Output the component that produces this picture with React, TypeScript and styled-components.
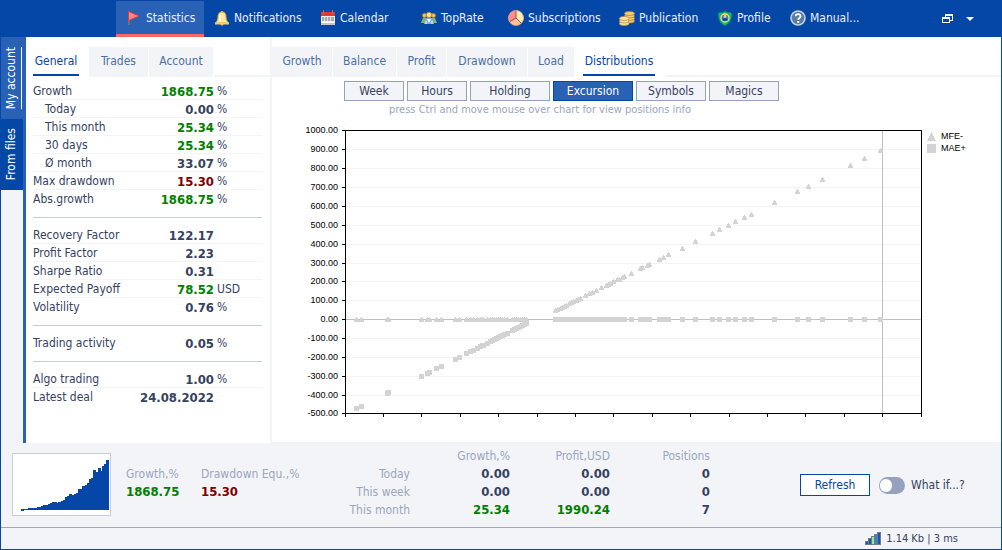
import React, { useState } from "react";
import styled, { createGlobalStyle, css } from "styled-components";

const c = {
  blue: "#0547a6",
  light: "#2961b5",
  panel: "#f3f4f7",
  text: "#35425f",
  muted: "#9aa6bd",
  tab: "#4a70a8",
  border: "#96a2bd",
  green: "#008000",
  red: "#800000",
  coral: "#ff6666",
  mark: "#d3d3d3",
};

const GlobalStyle = createGlobalStyle`
  * { box-sizing: border-box; }
  body { margin: 0; }
  body, button {
    font-family: "DejaVu Sans Condensed", Tahoma, "DejaVu Sans", sans-serif;
    font-size: 12px;
    line-height: 18px;
  }
  button { border: 0; padding: 0; cursor: pointer; white-space: nowrap; }
`;

const Window = styled.div`
  display: flex;
  flex-direction: column;
  min-height: 100vh;
  border: 1px solid ${c.blue};
  background: ${c.panel};
  color: ${c.text};
`;

const Header = styled.header`
  display: flex;
  height: 36px;
  background: ${c.blue};
  padding: 0 24px 0 115px;
`;

const Nav = styled.nav`
  display: flex;
  flex: 1;
`;

const NavButton = styled.button<{ $width: number; $active?: boolean; $apart?: boolean }>`
  display: flex;
  align-items: center;
  gap: 4px;
  width: ${(p) => p.$width}px;
  padding: 3px 0 3px 10px;
  margin-left: ${(p) => (p.$apart ? 15 : 0)}px;
  border-bottom: 3px solid ${(p) => (p.$active ? c.coral : "transparent")};
  background: ${(p) => (p.$active ? c.light : "transparent")};
  color: #e8f0fc;
  svg { flex: none; }
`;

const WindowTools = styled.div`
  display: flex;
  align-items: center;
  gap: 10px;
`;

const ToolButton = styled.button`
  display: flex;
  align-items: center;
  background: transparent;
`;

const Main = styled.main`
  display: flex;
  flex: 1;
`;

const Rail = styled.div`
  display: flex;
  flex-direction: column;
  flex: none;
  width: 25px;
  border-right: 3px solid ${c.light};
`;

const RailButton = styled.button<{ $height: number; $active?: boolean }>`
  display: flex;
  align-items: center;
  justify-content: center;
  height: ${(p) => p.$height}px;
  background: ${(p) => (p.$active ? c.light : c.blue)};
  color: #ffffff;
  span {
    writing-mode: vertical-rl;
    transform: rotate(180deg);
    line-height: 19px;
    border-left: 1px solid ${(p) => (p.$active ? "#ffffff" : "transparent")};
  }
`;

const SidePanel = styled.section`
  flex: none;
  width: 245px;
  background: #ffffff;
  padding-top: 10px;
  border-right: 1px solid ${c.panel};
`;

const ChartPanel = styled.section`
  flex: 1;
  min-width: 0;
  background: #ffffff;
  padding-top: 10px;
  border-bottom: 1px solid ${c.panel};
  margin-left: 1px;
`;

const Tabs = styled.div`
  display: flex;
  gap: 1px;
  height: 30px;
  &::after {
    content: "";
    flex: 1;
    align-self: flex-end;
    height: 2px;
    background: ${c.panel};
  }
`;

const Tab = styled.button<{ $width: number; $active?: boolean }>`
  width: ${(p) => p.$width}px;
  background: ${(p) => (p.$active ? "#ffffff" : c.panel)};
  color: ${(p) => (p.$active ? c.blue : c.tab)};
  padding-bottom: 3px;
  ${(p) =>
    p.$active &&
    css`
      width: ${p.$width - 18}px;
      height: 29px;
      margin: 0 9px 0 ${p.$width > 80 ? 8 : 7}px;
      padding-bottom: 0;
      border-bottom: 2px solid ${c.blue};
    `}
`;

const StatsTable = styled.table`
  width: 229px;
  margin: 5px 0 0 7px;
  border-spacing: 0;
  table-layout: fixed;
`;

const StatRow = styled.tr<{ $line?: boolean }>`
  th, td {
    height: 18px;
    line-height: 15px;
    padding: 2px 0 0;
    border-bottom: 1px solid ${(p) => (p.$line ? c.panel : "transparent")};
    white-space: nowrap;
  }
`;

const StatLabel = styled.th<{ $indent?: boolean }>`
  text-align: left;
  font-weight: 400;
  && { padding-left: ${(p) => (p.$indent ? 12 : 0)}px; }
`;

const StatValue = styled.td<{ $tone?: string }>`
  text-align: right;
  font-size: 13px;
  font-weight: 700;
  color: ${(p) => p.$tone || c.text};
`;

const StatUnit = styled.td`
  && { padding-left: 3px; }
`;

const Separator = styled.td`
  height: 18px;
  padding: 0;
  hr {
    height: 1px;
    margin: 0;
    border: 0;
    background: #c5ccd9;
  }
`;

const Options = styled.div`
  display: flex;
  gap: 3px;
  padding: 4px 0 0 72px;
`;

const Option = styled.button<{ $width: number; $active?: boolean }>`
  width: ${(p) => p.$width}px;
  height: 20px;
  border: 1px solid ${(p) => (p.$active ? c.blue : c.border)};
  background: ${(p) => (p.$active ? c.light : c.panel)};
  color: ${(p) => (p.$active ? "#ffffff" : c.text)};
`;

const Hint = styled.p`
  margin: 0;
  padding-left: 117px;
  font-size: 11px;
  line-height: 17px;
  color: ${c.muted};
`;

const Chart = styled.svg`
  display: block;
  width: 100%;
  height: auto;
  text {
    font-family: "Liberation Sans", Arial, sans-serif;
    font-size: 9px;
    fill: #000000;
  }
`;

const Footer = styled.footer`
  display: flex;
  height: 84px;
  padding-left: 11px;
`;

const Thumb = styled.div`
  flex: none;
  width: 99px;
  height: 63px;
  margin: 10px 15px 0 0;
  border: 1px solid #c8cdde;
  background: #ffffff;
  svg { display: block; }
`;

const Figure = styled.dl<{ $width: number }>`
  width: ${(p) => p.$width}px;
  margin: 22px 0 0;
  white-space: nowrap;
  dt { color: ${c.muted}; }
`;

const FigureValue = styled.dd<{ $tone: string }>`
  margin: 0;
  font-size: 13px;
  font-weight: 700;
  color: ${(p) => p.$tone};
`;

const Summary = styled.table`
  align-self: flex-start;
  width: 400px;
  margin-top: 4px;
  border-spacing: 0;
  table-layout: fixed;
  text-align: right;
  th, td { padding: 0; height: 18px; }
  th { font-weight: 400; color: ${c.muted}; text-align: right; }
`;

const SummaryValue = styled.td<{ $tone?: string }>`
  font-size: 13px;
  font-weight: 700;
  color: ${(p) => p.$tone || c.text};
`;

const Actions = styled.div`
  display: flex;
  align-items: center;
  gap: 9px;
  flex: 1;
  padding-left: 90px;
`;

const Refresh = styled.button`
  width: 70px;
  height: 22px;
  border: 1px solid ${c.blue};
  background: #ffffff;
  color: ${c.blue};
`;

const Switch = styled.label`
  display: flex;
  align-items: center;
  gap: 6px;
  white-space: nowrap;
  input {
    appearance: none;
    display: flex;
    width: 26px;
    height: 17px;
    margin: 0;
    padding: 2px 1px;
    border-radius: 9px;
    background: ${c.border};
  }
  input::before {
    content: "";
    width: 12px;
    height: 13px;
    border-radius: 6px;
    background: #ffffff;
  }
  input:checked { justify-content: flex-end; background: ${c.light}; }
`;

const StatusBar = styled.div`
  display: flex;
  align-items: center;
  justify-content: flex-end;
  gap: 5px;
  height: 22px;
  padding-right: 43px;
  border-top: 1px solid #a3a8b2;
  font-size: 11px;
`;

const Icon = ({ children }: { children: React.ReactNode }) => (
  <svg width="16" height="16" viewBox="0 0 16 16" aria-hidden="true">{children}</svg>
);

const FlagIcon = () => (
  <Icon>
    <path d="M3 1v14" stroke="#7b6a78" strokeWidth="2" />
    <path d="M2.500 1.500 13 6 2.500 10.500z" fill="#ff8780" stroke="#e23b42" />
  </Icon>
);

const BellIcon = () => (
  <Icon>
    <path d="M7 1h2v2h-2zM6 14h4l-2 2z" fill="#e8b84c" />
    <path d="M8 2C5 2 4 4 4 7c0 3-1 4-2.500 6h13C13 11 12 10 12 7c0-3-1-5-4-5z" fill="#ffe69a" stroke="#d8a83f" />
    <path d="M1 13.500h14" stroke="#f3cf6f" strokeWidth="2" />
    <path d="M6 5v6" stroke="#fff8d8" strokeWidth="2" />
  </Icon>
);

const CalendarIcon = () => (
  <Icon>
    <path d="M1 3h14v12H1z" fill="#eeeeee" />
    <path d="M1 2h14v4H1z" fill="#de3a3c" />
    <path d="M3.500 0v4M12.500 0v4" stroke="#9a7c80" />
    <path d="M2 7h12v4H2z" fill="#a9a9a9" />
    <path d="M4.500 7v4M7.500 7v4M10.500 7v4" stroke="#dddddd" />
    <path d="M1 13h14v2H1z" fill="#c5c5c5" />
    <path d="M2 12.500h12" stroke="#ffffff" />
  </Icon>
);

const PeopleIcon = () => (
  <Icon>
    <path d="M0 13l2-5h3l1 5zM10 13l1-5h3l2 5z" fill="#86b765" />
    <path d="M3 14l2-6h6l2 6z" fill="#79aeea" />
    <path d="M6 9h4l-2 4z" fill="#ffffff" />
    <circle cx="3.500" cy="5.500" r="2.200" fill="#f1bc68" stroke="#8a6835" strokeWidth=".7" />
    <circle cx="12.500" cy="5.500" r="2.200" fill="#f1bc68" stroke="#8a6835" strokeWidth=".7" />
    <circle cx="8" cy="5" r="2.700" fill="#ffe293" stroke="#b98a38" />
    <path d="M5 14v-3M11 14v-3" stroke="#ffffff" />
  </Icon>
);

const PieIcon = () => (
  <Icon>
    <circle cx="8" cy="8" r="7.500" fill="#ffc3a0" />
    <path d="M8 8V.5A7.500 7.500 0 0 0 1.500 11.800z" fill="#ff8e8a" />
    <path d="M8 8V.5A7.500 7.500 0 0 1 13.300 13.300z" fill="#fff0b3" />
    <path d="M8 .5V8l5.300 5.300M8 8l-6 3.500" fill="none" stroke="#b8473e" />
    <circle cx="8" cy="8" r="7.500" fill="none" stroke="#e8a083" strokeWidth=".8" />
  </Icon>
);

const CoinsIcon = () => (
  <Icon>
    {[11, 8.5, 6, 3.5].map((y) => (
      <ellipse key={y} cx="10.500" cy={y} rx="5" ry="2" fill="#f5cf77" stroke="#ae8034" strokeWidth=".8" />
    ))}
    {[13.5, 11, 8.5].map((y) => (
      <ellipse key={y} cx="5.200" cy={y} rx="4.800" ry="2" fill="#ffe79f" stroke="#b68b3d" strokeWidth=".8" />
    ))}
  </Icon>
);

const ShieldIcon = () => (
  <Icon>
    <path d="M8 1 10 2.500 14.500 3c0 6-1 10-6.500 12.500C2.500 13 1.500 9 1.500 3L6 2.500z" fill="#19bd80" stroke="#079464" />
    <circle cx="8" cy="8" r="4" fill="#3478c9" stroke="#ffe04f" strokeWidth="1.300" />
    <circle cx="8" cy="6.500" r="1.400" fill="#f7d27b" />
    <path d="M5.500 10.500c0-3 5-3 5 0z" fill="#173c7c" />
  </Icon>
);

const HelpIcon = () => (
  <Icon>
    <circle cx="8" cy="8" r="7" fill="#587da6" stroke="#c6d0db" strokeWidth="1.600" />
    <path d="M5.700 6.300C5.700 3.500 10.500 3.500 10.500 6.200 10.500 8 8.200 8 8.200 10" fill="none" stroke="#ffffff" strokeWidth="1.700" />
    <path d="M7.200 11h2v2h-2z" fill="#ffffff" />
  </Icon>
);

const RestoreIcon = () => (
  <svg width="11" height="10" viewBox="0 0 11 10" shapeRendering="crispEdges" aria-hidden="true">
    <path d="M3 0h8v7H8V6h2V2H4v1H3zM0 3h8v6H0zM1 5v3h6V5z" fill="#ffffff" fillRule="evenodd" />
  </svg>
);

const CaretIcon = () => (
  <svg width="14" height="10" viewBox="0 0 14 10" aria-hidden="true">
    <path d="M3 3h8L7 7z" fill="#ffffff" />
  </svg>
);

const SignalIcon = () => (
  <svg width="16" height="13" viewBox="0 0 16 13" shapeRendering="crispEdges" aria-hidden="true">
    <path d="M0 9h3V6h3V4h3V2h3V0h4v13H0z" fill="#727a88" />
    <path d="M1 10h2v2H1zM4 7h2v5H4z" fill="#1c55ac" />
    <path d="M7 5h2v7H7z" fill="#8bf08b" />
    <path d="M10 3h2v9h-2z" fill="#3c82d4" />
    <path d="M13 1h2v11h-2z" fill="#1c55ac" />
  </svg>
);

const navItems = [
  { label: "Statistics", icon: <FlagIcon />, width: 88, active: true },
  { label: "Notifications", icon: <BellIcon />, width: 106 },
  { label: "Calendar", icon: <CalendarIcon />, width: 86 },
  { label: "TopRate", icon: <PeopleIcon />, width: 87, apart: true },
  { label: "Subscriptions", icon: <PieIcon />, width: 111 },
  { label: "Publication", icon: <CoinsIcon />, width: 98 },
  { label: "Profile", icon: <ShieldIcon />, width: 73 },
  { label: "Manual...", icon: <HelpIcon />, width: 80 },
];

type Stat = { label: string; value: string; unit?: string; tone?: string; indent?: boolean };

const statGroups: Stat[][] = [
  [
    { label: "Growth", value: "1868.75", unit: "%", tone: c.green },
    { label: "Today", value: "0.00", unit: "%", indent: true },
    { label: "This month", value: "25.34", unit: "%", tone: c.green, indent: true },
    { label: "30 days", value: "25.34", unit: "%", tone: c.green, indent: true },
    { label: "Ø month", value: "33.07", unit: "%", indent: true },
    { label: "Max drawdown", value: "15.30", unit: "%", tone: c.red },
    { label: "Abs.growth", value: "1868.75", unit: "%", tone: c.green },
  ],
  [
    { label: "Recovery Factor", value: "122.17" },
    { label: "Profit Factor", value: "2.23" },
    { label: "Sharpe Ratio", value: "0.31" },
    { label: "Expected Payoff", value: "78.52", unit: "USD", tone: c.green },
    { label: "Volatility", value: "0.76", unit: "%" },
  ],
  [{ label: "Trading activity", value: "0.05", unit: "%" }],
  [
    { label: "Algo trading", value: "1.00", unit: "%" },
    { label: "Latest deal", value: "24.08.2022" },
  ],
];

const chartTabs: [string, number][] = [
  ["Growth", 60], ["Balance", 63], ["Profit", 49], ["Drawdown", 80], ["Load", 46], ["Distributions", 90],
];

const options: [string, number][] = [
  ["Week", 60], ["Hours", 60], ["Holding", 80], ["Excursion", 80], ["Symbols", 70], ["Magics", 70],
];

const summaryRows = [
  { label: "Today", growth: "0.00", profit: "0.00", positions: "0" },
  { label: "This week", growth: "0.00", profit: "0.00", positions: "0" },
  { label: "This month", growth: "25.34", profit: "1990.24", positions: "7", tone: c.green },
];

// Plot frame, in chart units
const plot = { left: 73, right: 649, top: 12, bottom: 295, zero: 201 };

const lossX = [
  11, 16, 42, 43, 76, 82, 84, 91, 96, 110, 114, 121, 125, 128, 132, 135, 137, 138, 142, 145, 147,
  149, 151, 153, 155, 157, 159, 162, 167, 169, 171, 173, 175, 177, 179, 181,
];
const gainX = [
  210, 212, 215, 217, 219, 221, 224, 226, 228, 231, 233, 235, 240, 244, 247, 251, 256, 261, 263,
  265, 268, 272, 274, 277, 279, 286, 295, 297, 302, 304, 314, 318, 323, 337, 350, 367, 374, 383,
  390, 399, 406, 429, 452, 463, 477, 505, 519, 535,
];
const lossY = (x: number) => Math.round(290 - (x - 11) * 0.5);
const gainY = (x: number) => Math.round(192 - (x - 210) * 0.492);

const Triangle = ({ x, y }: { x: number; y: number }) => (
  <path d={`M${x} ${y - 2}h1v1h1v2h1v2h-5v-2h1v-2h1z`} fill={c.mark} />
);
const Square = ({ x, y }: { x: number; y: number }) => (
  <rect x={x - 2} y={y - 2} width="5" height="5" fill={c.mark} />
);

function ExcursionChart() {
  const levels = Array.from({ length: 16 }, (_, i) => ({
    value: 1000 - i * 100,
    y: plot.top + Math.ceil((i * 283) / 15),
  }));
  const ticks = Array.from({ length: 16 }, (_, i) => plot.left + Math.floor(i * 38.4));
  return (
    <Chart viewBox="0 0 729 324" role="img" aria-label="Excursion distribution">
      <g shapeRendering="crispEdges">
        {levels.slice(1, -1).map(({ value, y }) => (
          <rect key={value} x={plot.left + 1} y={y} width="575" height="1" fill={value === 0 ? "#c0c0c0" : "#f3f3f3"} />
        ))}
        {levels.map(({ value, y }) => (
          <rect key={value} x={plot.left - 3} y={y} width="3" height="1" />
        ))}
        {ticks.map((x) => (
          <rect key={x} x={x} y={plot.bottom + 1} width="1" height="3" />
        ))}
        <rect x="610" y="13" width="1" height="282" fill="#c0c0c0" />
        <path d="M73 12h577v284H73zM74 13v282h575V13z" fillRule="evenodd" />
        {lossX.map((x) => (
          <g key={x}>
            <Triangle x={plot.left + x} y={plot.zero} />
            <Square x={plot.left + x} y={lossY(x)} />
          </g>
        ))}
        {gainX.map((x) => (
          <g key={x}>
            <Square x={plot.left + x} y={plot.zero} />
            <Triangle x={plot.left + x} y={gainY(x)} />
          </g>
        ))}
        <path d="M659 14h1v2h1v2h1v2h1v2h1v1h-9v-1h1v-2h1v-2h1v-2h1z" fill={c.mark} />
        <rect x="655" y="26" width="9" height="9" fill={c.mark} />
      </g>
      {levels.map(({ value, y }) => (
        <text key={value} x="66" y={y + 3} textAnchor="end">{value.toFixed(2)}</text>
      ))}
      <text x="669" y="21">MFE-</text>
      <text x="669" y="33">MAE+</text>
    </Chart>
  );
}

const GrowthThumb = () => (
  <svg width="97" height="61" viewBox="13 454 97 61" shapeRendering="crispEdges" aria-hidden="true">
    <path
      d="M21 511V509h7v-1h9v-1h4v-1h2v-1h5v-1h2v-1h2v-1h5v1h1v-1h3v-1h2v-1h2v-3h2v-1h2v-2h3v1h2v-1h2v-1h2v-4h4v-3h3v-1h2v-2h2v-4h2v-1h2v-8h3v2h2v-4h3v3h1v-5h2v-2h2v-4h3v50H24v1z"
      fill={c.blue}
    />
  </svg>
);

export default function App() {
  const [option, setOption] = useState("Excursion");
  return (
    <>
      <GlobalStyle />
      <Window>
        <Header>
          <Nav>
            {navItems.map((n) => (
              <NavButton key={n.label} $width={n.width} $active={n.active} $apart={n.apart}>
                {n.icon}
                {n.label}
              </NavButton>
            ))}
          </Nav>
          <WindowTools>
            <ToolButton aria-label="Restore window"><RestoreIcon /></ToolButton>
            <ToolButton aria-label="Menu"><CaretIcon /></ToolButton>
          </WindowTools>
        </Header>
        <Main>
          <Rail>
            <RailButton $height={82} $active><span>My account</span></RailButton>
            <RailButton $height={71}><span>From files</span></RailButton>
          </Rail>
          <SidePanel>
            <Tabs>
              <Tab $width={64} $active>General</Tab>
              <Tab $width={59}>Trades</Tab>
              <Tab $width={64}>Account</Tab>
            </Tabs>
            <StatsTable>
              <colgroup>
                <col />
                <col width="82" />
                <col width="48" />
              </colgroup>
              <tbody>
                {statGroups.map((group, g) => (
                  <React.Fragment key={g}>
                    {g > 0 && (
                      <tr>
                        <Separator colSpan={3}><hr /></Separator>
                      </tr>
                    )}
                    {group.map((s, i) => (
                      <StatRow key={s.label} $line={i < group.length - 1}>
                        <StatLabel scope="row" $indent={s.indent}>{s.label}</StatLabel>
                        <StatValue $tone={s.tone}>{s.value}</StatValue>
                        <StatUnit>{s.unit}</StatUnit>
                      </StatRow>
                    ))}
                  </React.Fragment>
                ))}
              </tbody>
            </StatsTable>
          </SidePanel>
          <ChartPanel>
            <Tabs>
              {chartTabs.map(([label, width]) => (
                <Tab key={label} $width={width} $active={label === "Distributions"}>{label}</Tab>
              ))}
            </Tabs>
            <Options>
              {options.map(([label, width]) => (
                <Option key={label} $width={width} $active={label === option} onClick={() => setOption(label)}>
                  {label}
                </Option>
              ))}
            </Options>
            <Hint>press Ctrl and move mouse over chart for view positions info</Hint>
            <ExcursionChart />
          </ChartPanel>
        </Main>
        <Footer>
          <Thumb><GrowthThumb /></Thumb>
          <Figure $width={75}>
            <dt>Growth,%</dt>
            <FigureValue $tone={c.green}>1868.75</FigureValue>
          </Figure>
          <Figure $width={109}>
            <dt>Drawdown Equ.,%</dt>
            <FigureValue $tone={c.red}>15.30</FigureValue>
          </Figure>
          <Summary>
            <thead>
              <tr>
                <td />
                <th scope="col">Growth,%</th>
                <th scope="col">Profit,USD</th>
                <th scope="col">Positions</th>
              </tr>
            </thead>
            <tbody>
              {summaryRows.map((r) => (
                <tr key={r.label}>
                  <th scope="row">{r.label}</th>
                  <SummaryValue $tone={r.tone}>{r.growth}</SummaryValue>
                  <SummaryValue $tone={r.tone}>{r.profit}</SummaryValue>
                  <SummaryValue>{r.positions}</SummaryValue>
                </tr>
              ))}
            </tbody>
          </Summary>
          <Actions>
            <Refresh>Refresh</Refresh>
            <Switch>
              <input type="checkbox" role="switch" />
              What if...?
            </Switch>
          </Actions>
        </Footer>
        <StatusBar>
          <SignalIcon />
          <span>1.14 Kb | 3 ms</span>
        </StatusBar>
      </Window>
    </>
  );
}
